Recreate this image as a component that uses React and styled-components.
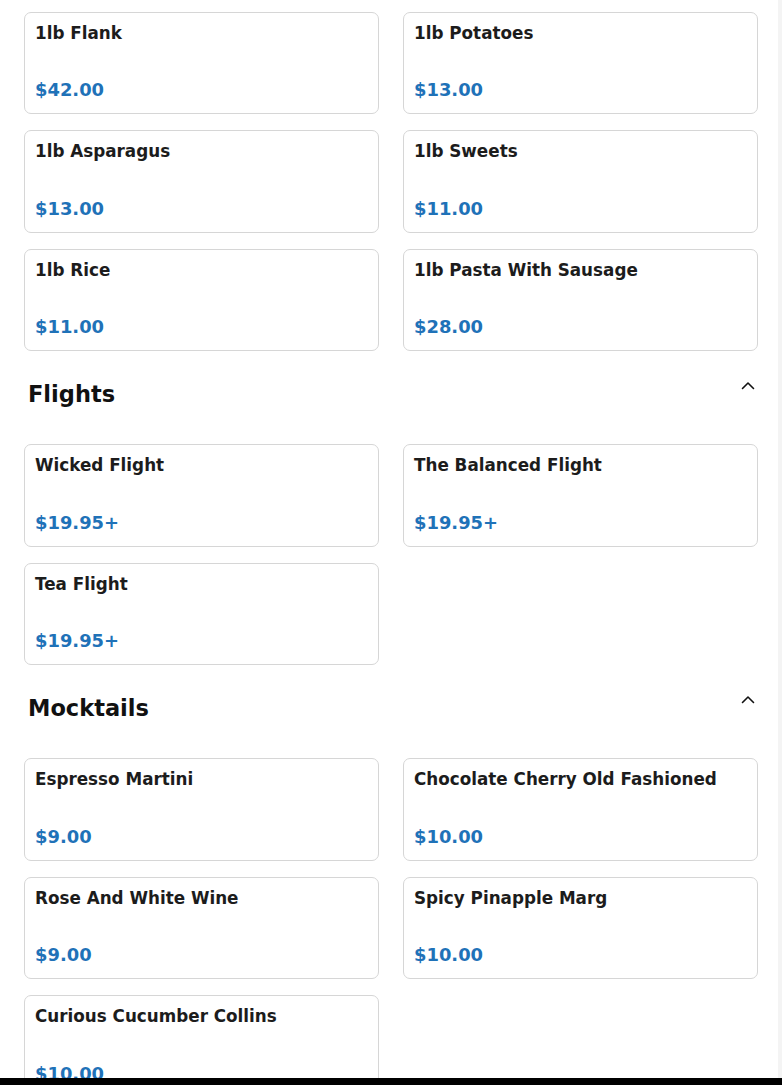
import React from "react";
import styled, { createGlobalStyle } from "styled-components";

const Global = createGlobalStyle`
  html, body { margin: 0; padding: 0; background: #ffffff; }
  body { font-family: "DejaVu Sans", sans-serif; color: #1a1a1a; overflow: hidden; }
`;

const Page = styled.div`
  padding: 11.5px 24px 0 24px;
  width: 782px;
  box-sizing: border-box;
`;

const Section = styled.section`
  display: flex;
  flex-direction: column;
`;

const SectionHeader = styled.div`
  display: flex;
  align-items: flex-start;
  justify-content: space-between;
  padding: 29px 0 0 4px;
  height: 93px;
  box-sizing: border-box;
`;

const SectionTitle = styled.h2`
  margin: 0;
  font-size: 22.5px;
  font-weight: 700;
  color: #111;
  line-height: 28px;
`;

const Chevron = styled.svg`
  width: 16px;
  height: 16px;
  margin-top: -2px;
  margin-right: 2px;
`;

const Grid = styled.div`
  display: grid;
  grid-template-columns: 1fr 1fr;
  column-gap: 24px;
  row-gap: 16px;
`;

const Card = styled.div`
  border: 1px solid #d6d6d6;
  border-radius: 7px;
  height: 102.5px;
  box-sizing: border-box;
  padding: 9px 10px 0 10px;
  display: flex;
  flex-direction: column;
  background: #fff;
`;

const Name = styled.div`
  font-size: 16.8px;
  font-weight: 700;
  color: #1c1c1c;
  line-height: 22px;
`;

const Price = styled.div`
  margin-top: 35.5px;
  font-size: 17.9px;
  font-weight: 700;
  color: #1f72b8;
  line-height: 22px;
`;

const BottomBar = styled.div`
  position: fixed;
  left: 0;
  right: 0;
  bottom: 0;
  height: 7px;
  background: #000;
`;

const ScrollStrip = styled.div`
  position: fixed;
  top: 0;
  right: 0;
  bottom: 0;
  width: 4px;
  background: #f4f4f4;
`;

const sections = [
  {
    title: null,
    items: [
      ["1lb Flank", "$42.00"],
      ["1lb Potatoes", "$13.00"],
      ["1lb Asparagus", "$13.00"],
      ["1lb Sweets", "$11.00"],
      ["1lb Rice", "$11.00"],
      ["1lb Pasta With Sausage", "$28.00"],
    ],
  },
  {
    title: "Flights",
    items: [
      ["Wicked Flight", "$19.95+"],
      ["The Balanced Flight", "$19.95+"],
      ["Tea Flight", "$19.95+"],
    ],
  },
  {
    title: "Mocktails",
    items: [
      ["Espresso Martini", "$9.00"],
      ["Chocolate Cherry Old Fashioned", "$10.00"],
      ["Rose And White Wine", "$9.00"],
      ["Spicy Pinapple Marg", "$10.00"],
      ["Curious Cucumber Collins", "$10.00"],
    ],
  },
];

function ChevronUp() {
  return (
    <Chevron viewBox="0 0 16 16" fill="none" stroke="#111" strokeWidth="1.6" strokeLinecap="round" strokeLinejoin="round">
      <path d="M2.5 10.5 L8 5 L13.5 10.5" />
    </Chevron>
  );
}

export default function App() {
  return (
    <>
      <Global />
      <Page>
        {sections.map((s, i) => (
          <Section key={i}>
            {s.title && (
              <SectionHeader>
                <SectionTitle>{s.title}</SectionTitle>
                <ChevronUp />
              </SectionHeader>
            )}
            <Grid>
              {s.items.map(([n, p]) => (
                <Card key={n}>
                  <Name>{n}</Name>
                  <Price>{p}</Price>
                </Card>
              ))}
            </Grid>
          </Section>
        ))}
      </Page>
      <ScrollStrip />
      <BottomBar />
    </>
  );
}
